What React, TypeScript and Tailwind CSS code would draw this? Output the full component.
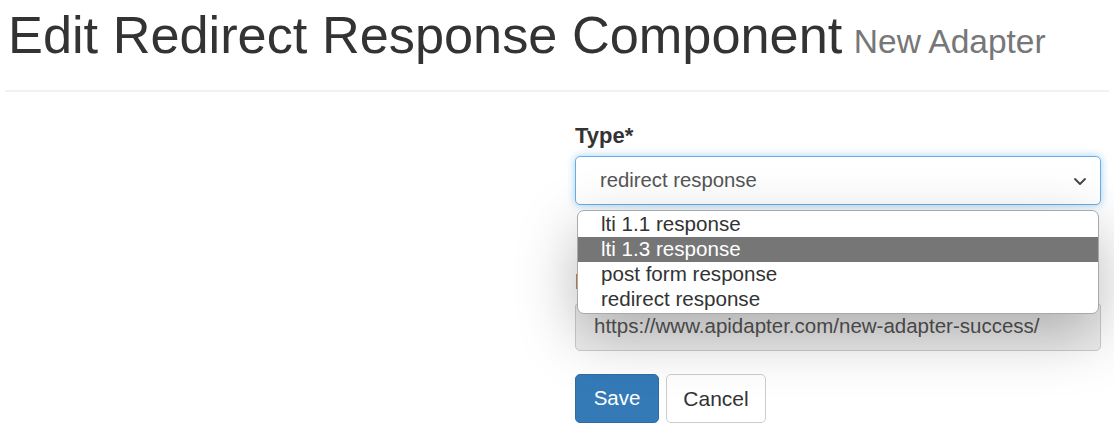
import React from "react";

export default function App() {
  const options = ["lti 1.1 response", "lti 1.3 response", "post form response", "redirect response"];
  return (
    <div className="w-[1114px] h-[441px] bg-white overflow-hidden text-[#333]" style={{ fontFamily: '"Liberation Sans", Arial, sans-serif' }}>
      <div className="pl-[8px] pt-[0px] h-[90px] flex items-start">
        <h1 className="text-[52.3px] leading-[70px] font-normal text-[#333] whitespace-nowrap">
          Edit Redirect Response Component{" "}
          <small className="text-[33.5px] text-[#777] font-normal -ml-[3px]">New Adapter</small>
        </h1>
      </div>
      <div className="mx-[5px] h-[2px] bg-[#f2f2f2]" />
      <div className="pl-[575px] pr-[13px] pt-[31px]">
        <label className="block text-[22px] font-bold leading-[25px] text-[#333]">Type*</label>
        <div className="relative mt-[8px]">
          <div className="h-[49px] rounded-[5px] border border-[#66afe9] shadow-[0_0_8px_rgba(102,175,233,0.6)] flex items-center justify-between pl-[24px] pr-[12px] text-[20.3px] text-[#555] bg-white">
            <span>redirect response</span>
            <svg width="16" height="16" viewBox="0 0 16 16" fill="none">
              <path d="M3 6l5 5 5-5" stroke="#444" strokeWidth="1.8" strokeLinecap="round" strokeLinejoin="round" />
            </svg>
          </div>
          <div className="mt-[64px]">
            <label className="block text-[22px] font-bold leading-[25px] text-[#333]">Redirect URL*</label>
            <div className="mt-[8px] h-[49px] rounded-[5px] border border-[#ccc] bg-[#eee] flex items-center pl-[18px] text-[20.5px] text-[#555]">
              https://www.apidapter.com/new-adapter-success/
            </div>
          </div>
          <div className="mt-[23px] flex gap-[7px]">
            <button className="h-[49px] w-[84px] rounded-[5px] bg-[#337ab7] border border-[#2e6da4] text-white text-[20.5px]">Save</button>
            <button className="h-[49px] w-[100px] rounded-[5px] bg-white border border-[#ccc] text-[#333] text-[21px]">Cancel</button>
          </div>
          <div className="absolute left-[2px] right-[2px] top-[54px] rounded-[7px] border border-[#a9a9a9] bg-white shadow-[0_20px_60px_rgba(0,0,0,0.28)] overflow-hidden py-[1px]">
            {options.map((o, i) => (
              <div
                key={o}
                className={`h-[25px] leading-[24px] pl-[23px] text-[20.6px] ${i === 1 ? "bg-[#767676] text-white" : "text-[#333]"}`}
              >
                {o}
              </div>
            ))}
          </div>
        </div>
      </div>
    </div>
  );
}
